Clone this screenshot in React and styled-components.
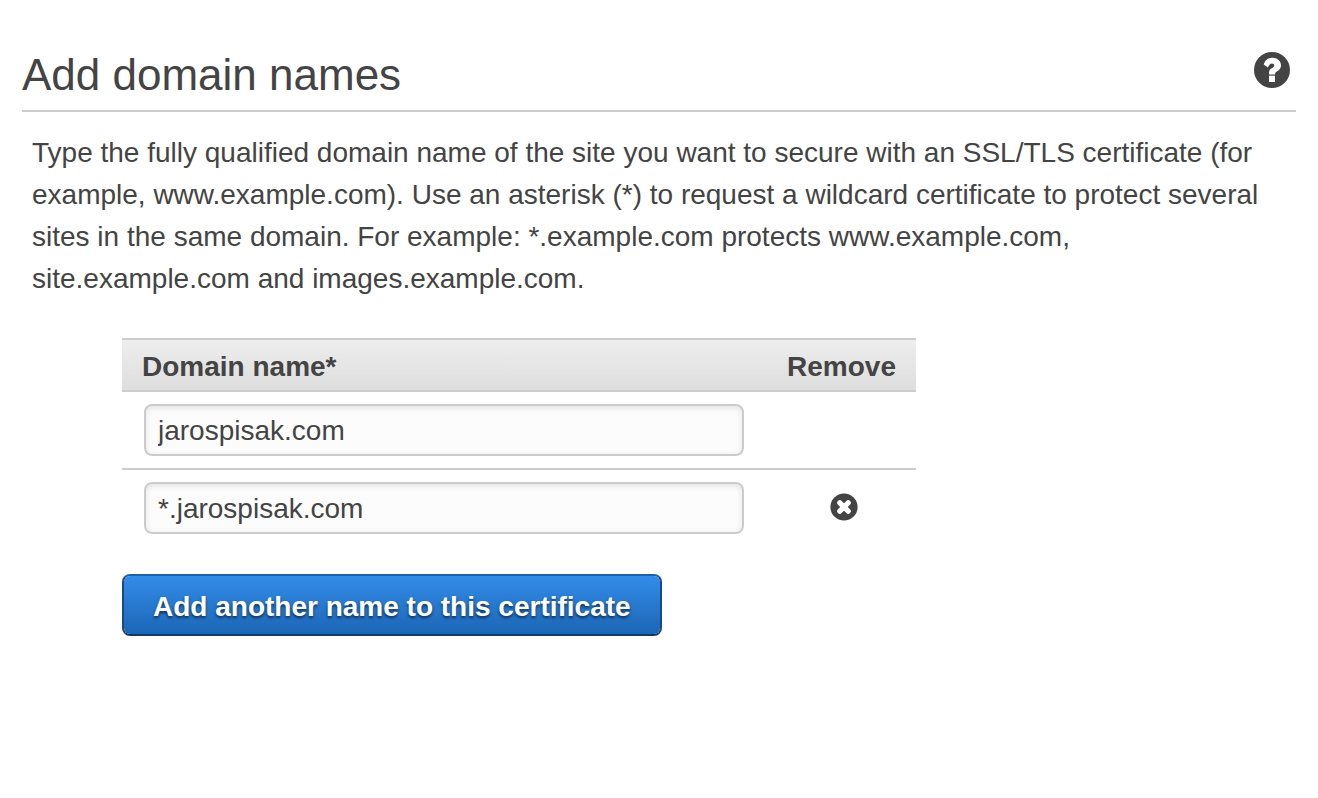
import React, { useState } from "react";
import styled, { createGlobalStyle } from "styled-components";

const ink = "#444444";
const line = "#cccccc";

const GlobalStyle = createGlobalStyle`
  *, *::before, *::after { box-sizing: border-box; }
  body {
    margin: 0;
    background: #ffffff;
    color: ${ink};
    font-family: "Helvetica Neue", Helvetica, "Liberation Sans", Arial, sans-serif;
    font-size: 28px;
    line-height: 42px;
  }
`;

const Page = styled.main`
  padding: 40px 22px;
`;

const Header = styled.header`
  display: flex;
  align-items: flex-start;
  justify-content: space-between;
  height: 72px;
  padding: 8px 6px 0 0;
  border-bottom: 2px solid ${line};
`;

const Title = styled.h1`
  margin: 0;
  font-size: 44px;
  font-weight: 400;
  line-height: 54px;
`;

const IconButton = styled.button`
  display: inline-flex;
  vertical-align: middle;
  margin: 0;
  padding: 0;
  border: 0;
  background: none;
  color: ${ink};
  cursor: pointer;
`;

const HelpButton = styled(IconButton)`
  padding-top: 4px;
`;

const Intro = styled.p`
  margin: 20px 0 38px;
  padding: 0 10px;
`;

const Form = styled.form`
  display: flex;
  flex-direction: column;
  align-items: flex-start;
  gap: 28px;
  padding-left: 100px;
`;

const Table = styled.table`
  width: 100%;
  max-width: 794px;
  border-spacing: 0;
`;

const HeadCell = styled.th`
  height: 54px;
  padding: 4px 20px 0;
  border-top: 2px solid ${line};
  border-bottom: 2px solid ${line};
  font-weight: 700;
  line-height: 46px;
  text-align: ${(p) => p.$align || "left"};
`;

const HeadRow = styled.tr`
  background: linear-gradient(#eeeeee, #dddddd);
`;

const Cell = styled.td`
  padding: ${(p) => (p.$narrow ? "0 0 4px 6px" : "12px 22px")};
  text-align: ${(p) => (p.$narrow ? "center" : "left")};
  vertical-align: middle;
  line-height: ${(p) => (p.$narrow ? "28px" : "42px")};
`;

const Row = styled.tr`
  & + & > td { border-top: 2px solid ${line}; }
`;

const RemoveColumn = styled.col`
  width: 150px;
`;

const NameInput = styled.input`
  display: block;
  width: 100%;
  height: 52px;
  padding: 2px 12px 0;
  border: 2px solid ${line};
  border-radius: 8px;
  background: #fcfcfc;
  box-shadow: inset 0 2px 6px rgba(0, 0, 0, 0.1);
  color: ${ink};
  font: inherit;
  outline: none;
`;

const PrimaryButton = styled.button`
  height: 62px;
  padding: 4px 29px 0;
  border: 2px solid;
  border-color: #1a62ae #164a82 #103c6c;
  border-radius: 8px;
  background: linear-gradient(#338ce8, #1c66b6) padding-box;
  color: #ffffff;
  font: inherit;
  font-weight: 700;
  text-shadow: 0 2px 3px rgba(0, 0, 0, 0.6);
  cursor: pointer;
`;

function HelpIcon() {
  return (
    <svg width="36" height="36" viewBox="0 0 36 36" aria-hidden="true">
      <circle cx="18" cy="18" r="18" fill="currentColor" />
      <path
        d="M9.7 12.4C11.2 8 14 5.7 18.4 5.7C23.2 5.7 27 9 27 13.2C27 16.3 25.4 17.9 23.2 19.2C21.4 20.3 21 20.8 21 22.4H15V20.9C15 18.2 16.4 17 18.2 15.9C19.6 15 20.2 14.5 20.2 13.4C20.2 12.3 19.4 11.6 18 11.6C16.2 11.6 15.3 12.8 13.8 15.6Z"
        fill="#ffffff"
      />
      <rect x="15" y="23.7" width="6" height="6.3" fill="#ffffff" />
    </svg>
  );
}

function RemoveIcon() {
  return (
    <svg width="28" height="28" viewBox="0 0 28 28" aria-hidden="true">
      <circle cx="14" cy="14" r="13.6" fill="currentColor" />
      <path
        d="M9.8 9.8L18.2 18.2M18.2 9.8L9.8 18.2"
        stroke="#ffffff"
        strokeWidth="5.2"
        strokeLinecap="round"
      />
    </svg>
  );
}

export default function App() {
  const [names, setNames] = useState(["jarospisak.com", "*.jarospisak.com"]);
  const update = (index, value) =>
    setNames(names.map((name, i) => (i === index ? value : name)));
  const remove = (index) => setNames(names.filter((_, i) => i !== index));

  return (
    <>
      <GlobalStyle />
      <Page>
        <Header>
          <Title>Add domain names</Title>
          <HelpButton type="button" aria-label="Help">
            <HelpIcon />
          </HelpButton>
        </Header>
        <Intro>
          Type the fully qualified domain name of the site you want to secure
          with an SSL/TLS certificate (for example, www.example.com). Use an
          asterisk (*) to request a wildcard certificate to protect several
          sites in the same domain. For example: *.example.com protects
          www.example.com, site.example.com and images.example.com.
        </Intro>
        <Form onSubmit={(e) => e.preventDefault()}>
          <Table>
            <colgroup>
              <col />
              <RemoveColumn />
            </colgroup>
            <thead>
              <HeadRow>
                <HeadCell scope="col" id="domain-name">Domain name*</HeadCell>
                <HeadCell scope="col" $align="right">Remove</HeadCell>
              </HeadRow>
            </thead>
            <tbody>
              {names.map((name, index) => (
                <Row key={index}>
                  <Cell>
                    <NameInput
                      type="text"
                      aria-labelledby="domain-name"
                      value={name}
                      onChange={(e) => update(index, e.target.value)}
                    />
                  </Cell>
                  <Cell $narrow>
                    {index > 0 && (
                      <IconButton
                        type="button"
                        aria-label={`Remove ${name}`}
                        onClick={() => remove(index)}
                      >
                        <RemoveIcon />
                      </IconButton>
                    )}
                  </Cell>
                </Row>
              ))}
            </tbody>
          </Table>
          <PrimaryButton type="button" onClick={() => setNames([...names, ""])}>
            Add another name to this certificate
          </PrimaryButton>
        </Form>
      </Page>
    </>
  );
}
